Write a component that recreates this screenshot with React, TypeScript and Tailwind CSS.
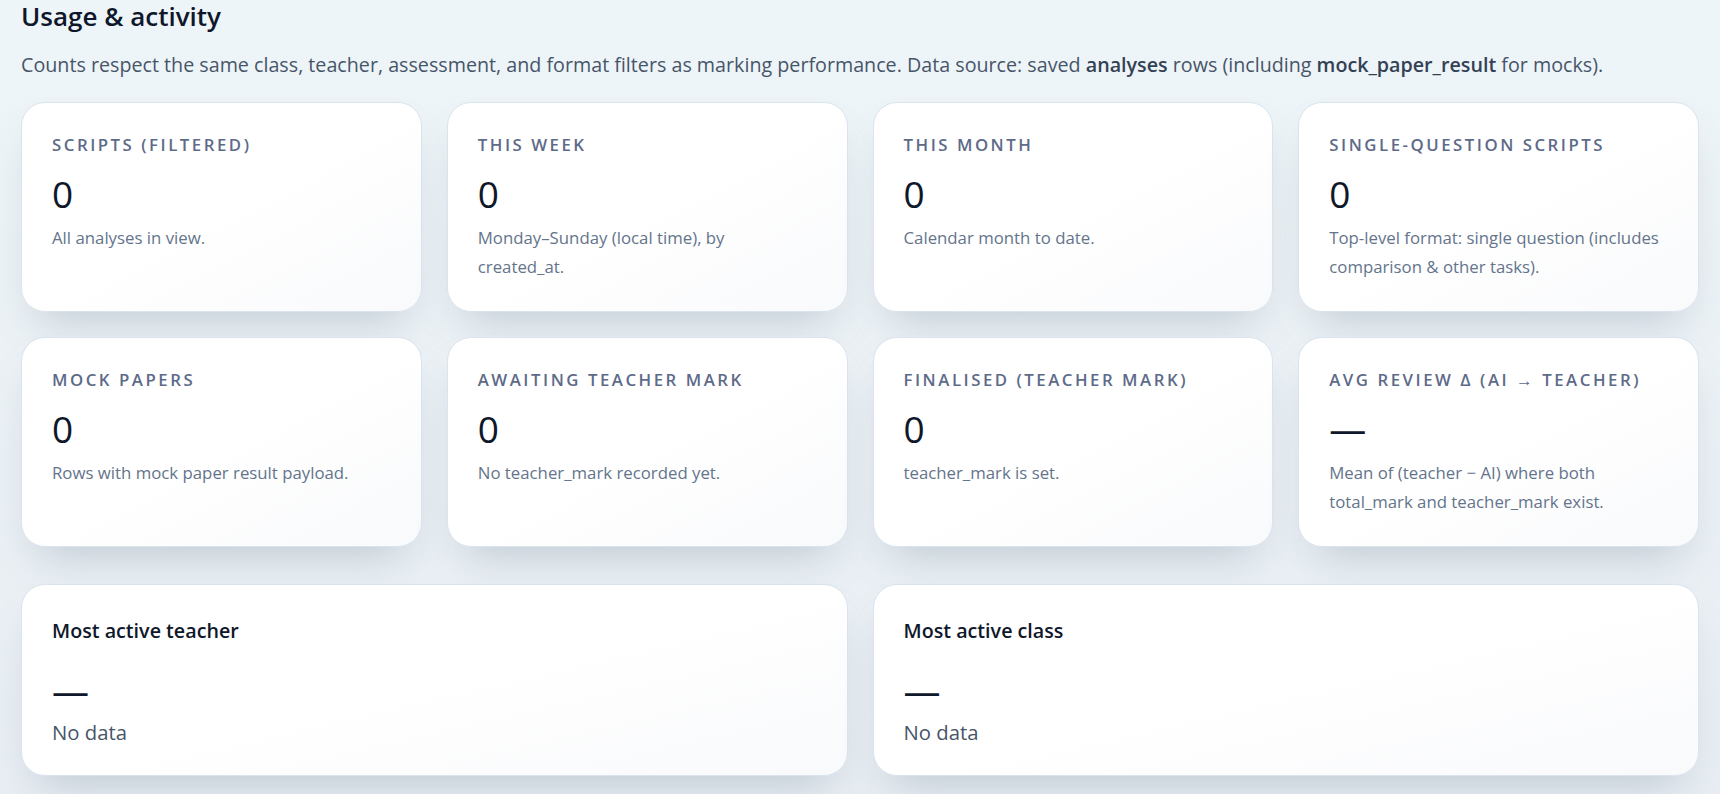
import React from "react";

type Stat = { label: string; value: string; desc: string };

const stats: Stat[] = [
  { label: "Scripts (filtered)", value: "0", desc: "All analyses in view." },
  { label: "This week", value: "0", desc: "Monday–Sunday (local time), by created_at." },
  { label: "This month", value: "0", desc: "Calendar month to date." },
  {
    label: "Single-question scripts",
    value: "0",
    desc: "Top-level format: single question (includes comparison & other tasks).",
  },
  { label: "Mock papers", value: "0", desc: "Rows with mock paper result payload." },
  { label: "Awaiting teacher mark", value: "0", desc: "No teacher_mark recorded yet." },
  { label: "Finalised (teacher mark)", value: "0", desc: "teacher_mark is set." },
  {
    label: "Avg review Δ (AI → teacher)",
    value: "—",
    desc: "Mean of (teacher − AI) where both total_mark and teacher_mark exist.",
  },
];

function StatCard({ s }: { s: Stat }) {
  return (
    <div className="rounded-[24px] border border-[#dae3ee] bg-gradient-to-br from-white via-white to-[#f9fafc] pl-[30px] pr-[34px] pt-[31px] pb-[30px] shadow-[0_24px_44px_-18px_rgba(100,116,139,0.34)]">
      <div className="text-[16.8px] leading-[22px] font-semibold uppercase tracking-[0.15em] text-[#5d6a88] whitespace-nowrap">
        {s.label}
      </div>
      <div className="mt-[16px] text-[37px] leading-[43px] font-medium text-[#0f172a]">{s.value}</div>
      <div className="mt-[8px] text-[16.8px] leading-[29px] text-[#64748b]">{s.desc}</div>
    </div>
  );
}

function ActiveCard({ title }: { title: string }) {
  return (
    <div className="rounded-[24px] border border-[#dae3ee] bg-gradient-to-br from-white via-white to-[#f9fafc] px-[30px] pt-[32px] pb-[29px] shadow-[0_24px_44px_-18px_rgba(100,116,139,0.34)]">
      <div className="text-[19.7px] leading-[28px] font-semibold text-[#0f172a]">{title}</div>
      <div className="mt-[24px] text-[37px] leading-[43px] font-medium text-[#0f172a]">—</div>
      <div className="mt-[6px] text-[20.3px] leading-[28px] text-[#475569]">No data</div>
    </div>
  );
}

export default function App() {
  return (
    <div
      className="min-h-screen bg-[linear-gradient(180deg,#eef5f8_0%,#ebf1f5_50%,#e8eef3_100%)] px-[21px] pb-10"
      style={{ fontFamily: '"Open Sans", "Noto Sans", Arial, sans-serif' }}
    >
      <h1 className="text-[26px] leading-[33px] font-semibold text-[#0f172a]">Usage &amp; activity</h1>
      <p className="mt-[18px] text-[19.7px] leading-[28px] text-[#475569] whitespace-nowrap">
        Counts respect the same class, teacher, assessment, and format filters as marking performance. Data
        source: saved <span className="font-semibold text-[#334155]">analyses</span> rows (including{" "}
        <span className="font-semibold text-[#334155]">mock_paper_result</span> for mocks).
      </p>
      <div className="mt-[23px] grid grid-cols-4 gap-[25px]">
        {stats.map((s) => (
          <StatCard key={s.label} s={s} />
        ))}
      </div>
      <div className="mt-[37px] grid grid-cols-2 gap-[25px]">
        <ActiveCard title="Most active teacher" />
        <ActiveCard title="Most active class" />
      </div>
    </div>
  );
}
